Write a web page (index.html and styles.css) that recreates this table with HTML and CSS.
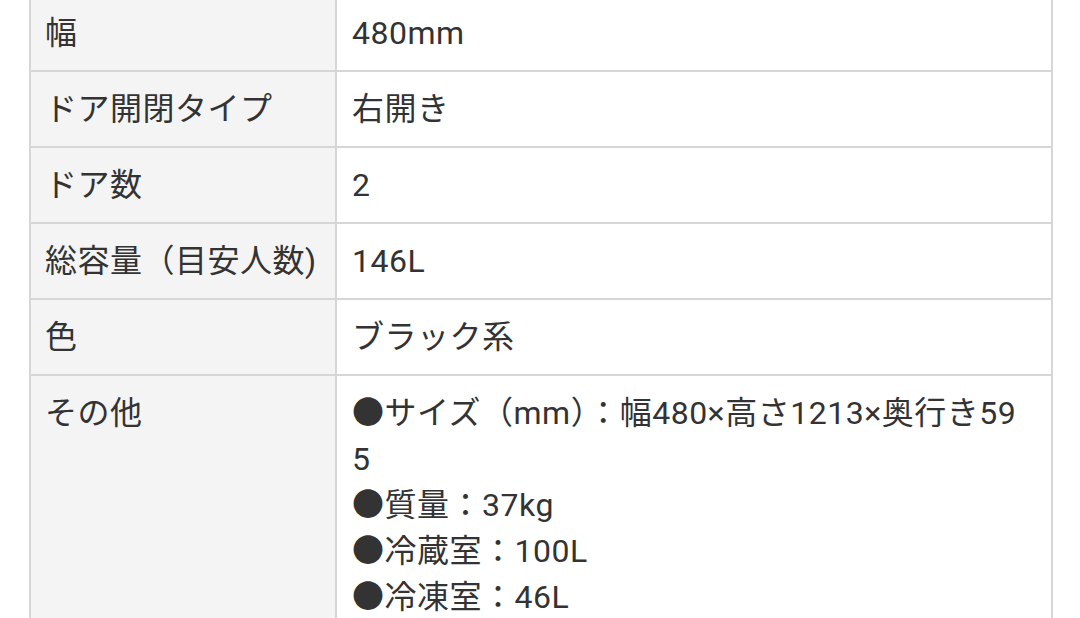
FILE: index.html
```html
<!DOCTYPE html>
<html lang="ja">
<head>
<meta charset="utf-8">
<link rel="stylesheet" href="styles.css">
</head>
<body>
<div class="page">
<table class="spec">
  <tr><th>幅</th><td>480mm</td></tr>
  <tr><th>ドア開閉タイプ</th><td>右開き</td></tr>
  <tr><th>ドア数</th><td>2</td></tr>
  <tr><th>総容量（目安人数)</th><td>146L</td></tr>
  <tr><th>色</th><td>ブラック系</td></tr>
  <tr><th>その他</th><td>●サイズ（mm）：幅480×高さ1213×奥行き595<br>●質量：37kg<br>●冷蔵室：100L<br>●冷凍室：46L</td></tr>
</table>
</div>
</body>
</html>
```
FILE: styles.css
```css
html, body {
  margin: 0;
  padding: 0;
  background: #ffffff;
}
body {
  font-family: Roboto, "Noto Sans CJK JP", sans-serif;
  color: #333333;
  font-size: 32px;
  line-height: 46px;
  letter-spacing: 0.5px;
  overflow: hidden;
  height: 618px;
}
.page {
  padding-left: 29px;
  margin-top: -6px;
}
.spec {
  width: 1024px;
  border-collapse: separate;
  border-spacing: 0;
  border-left: 2px solid #d6d6d6;
  border-top: 2px solid #d6d6d6;
  table-layout: fixed;
}
.spec th, .spec td {
  border-right: 2px solid #d6d6d6;
  border-bottom: 2px solid #d6d6d6;
  padding: 14px 14px 14px 14px;
  vertical-align: top;
  text-align: left;
  font-weight: normal;
}
.spec th {
  width: 276px;
  background: #f4f4f4;
  white-space: nowrap;
}
.spec td {
  background: #ffffff;
  padding-left: 15px;
  padding-right: 20px;
  word-break: break-all;
}
```
